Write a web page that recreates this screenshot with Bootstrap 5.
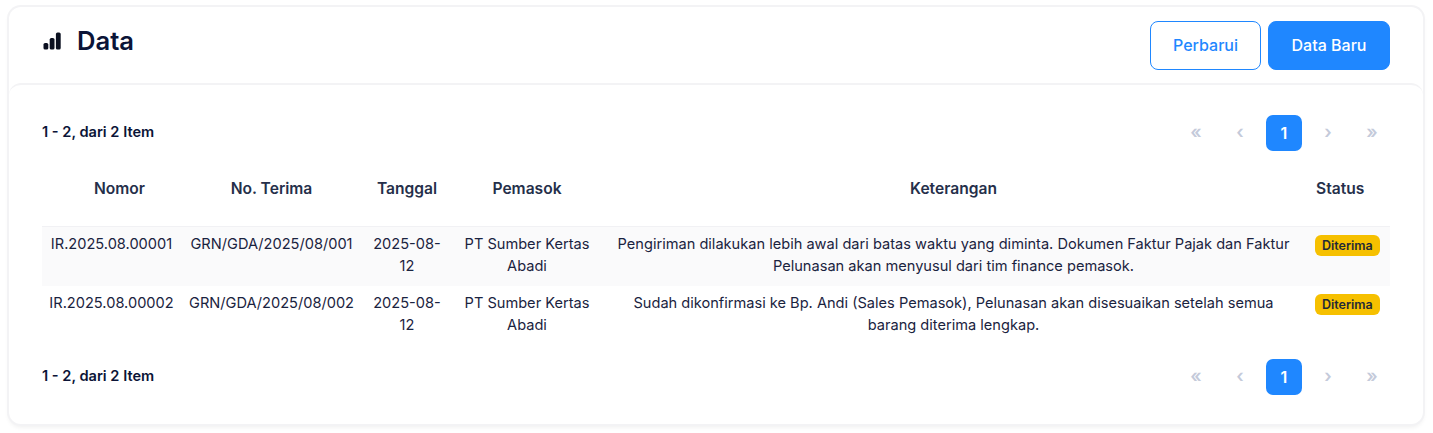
<!DOCTYPE html>
<html lang="id">
<head>
<meta charset="utf-8">
<title>Data</title>
<link href="https://cdn.jsdelivr.net/npm/bootstrap@5.3.0/dist/css/bootstrap.min.css" rel="stylesheet">
<style>
html,body{height:433px;overflow:hidden;background:#fff}
body{font-family:Inter,"Liberation Sans",sans-serif;color:#0f1a3a;padding:7px 10px 8px 9px;font-size:14px}
.shell{border:0;border-radius:12px;box-shadow:0 0 0 2px #f3f3f5,0 3px 5px rgba(0,0,0,.07);height:417px;background:#fff;overflow:hidden}
.shell-head{height:76px;padding:0 33px;display:flex;justify-content:space-between;align-items:flex-start}
.shell-title{display:flex;align-items:center;gap:16px;margin:18px 0 0 1px;font-size:25.6px;font-weight:600;line-height:32px;color:#0b1437}
.bars{display:block}
.acts{display:flex;gap:7px;margin-top:14px}
.acts .btn{height:49px;font-size:16px;font-weight:500;border-radius:8px;padding:0 0 2px;display:flex;align-items:center;justify-content:center}
.btn-a{width:111px;color:#1f87ff;background:#fff;border:1px solid #1f87ff}
.btn-b{width:122px;color:#fff;background:#1f87ff;border:1px solid #1f87ff}
.shell-body{border-top:2px solid #f3f3f5;border-radius:12px 12px 0 0;height:341px;padding:30px 33px 0 33px}
.pg-row{display:flex;justify-content:space-between;align-items:center;height:36px}
.pg-info{font-size:14.6px;font-weight:600;color:#0b1437}
.pg-list{display:flex;gap:8px;list-style:none;margin:0;padding:0}
.pg-list li{width:36px;height:36px;padding-bottom:3px;display:flex;align-items:center;justify-content:center;color:#c4cada;border-radius:7px;font-size:18px;font-weight:600}
.pg-list li.on{background:#1f87ff;color:#fff;font-size:16px;font-weight:600;padding-bottom:0}
.tbl{margin:0;font-size:14.6px;line-height:22px;text-align:center;color:#1a2340;width:100%;table-layout:fixed;--bs-table-bg:transparent}
.tbl th{font-size:15.6px;font-weight:600;color:#252f4a;padding:27px 8px 26px;border-bottom:1px solid #f1f1f4;line-height:22px;box-shadow:none}
.tbl th:first-child{padding-left:24px}
.tbl td{padding:6px 8px;border:0;vertical-align:top;box-shadow:none;height:59px}
.tbl td:first-child{padding:6px 0;white-space:nowrap}
.tbl td:last-child{padding:7px 10px 6px;text-align:left}
.tbl th:last-child{padding:27px 10px 26px 11px;text-align:left}
.tbl tr.alt td{background:#fafafb}
.c1{width:139px}.c2{width:181px}.c3{width:90px}.c4{width:150px}.c6{width:85px}
.tag{display:inline-block;background:#f6c000;color:#1f2937;font-size:12.5px;font-weight:600;line-height:15px;padding:3px 7px;border-radius:6px}
.foot{margin-top:14px}
</style>
</head>
<body>
<div class="card shell">
  <div class="shell-head">
    <h1 class="shell-title">
      <svg class="bars" width="18" height="18" viewBox="0 0 18 18" fill="#0b1020"><rect x="0.5" y="11" width="4.8" height="6.6" rx="1.6"/><rect x="6.7" y="6" width="4.8" height="11.6" rx="1.6"/><rect x="12.9" y="0.4" width="4.8" height="17.2" rx="1.6"/></svg>
      Data
    </h1>
    <div class="acts">
      <button type="button" class="btn btn-a">Perbarui</button>
      <button type="button" class="btn btn-b">Data Baru</button>
    </div>
  </div>
  <div class="shell-body">
    <div class="pg-row">
      <div class="pg-info">1 - 2, dari 2 Item</div>
      <ul class="pg-list"><li>«</li><li>‹</li><li class="on">1</li><li>›</li><li>»</li></ul>
    </div>
    <table class="table tbl">
      <colgroup><col class="c1"><col class="c2"><col class="c3"><col class="c4"><col><col class="c6"></colgroup>
      <thead>
        <tr><th>Nomor</th><th>No. Terima</th><th>Tanggal</th><th>Pemasok</th><th>Keterangan</th><th>Status</th></tr>
      </thead>
      <tbody>
        <tr class="alt"><td>IR.2025.08.00001</td><td>GRN/GDA/2025/08/001</td><td>2025-08-12</td><td>PT Sumber Kertas Abadi</td><td>Pengiriman dilakukan lebih awal dari batas waktu yang diminta. Dokumen Faktur Pajak dan Faktur Pelunasan akan menyusul dari tim finance pemasok.</td><td><span class="tag">Diterima</span></td></tr>
        <tr><td>IR.2025.08.00002</td><td>GRN/GDA/2025/08/002</td><td>2025-08-12</td><td>PT Sumber Kertas Abadi</td><td>Sudah dikonfirmasi ke Bp. Andi (Sales Pemasok), Pelunasan akan disesuaikan setelah semua barang diterima lengkap.</td><td><span class="tag">Diterima</span></td></tr>
      </tbody>
    </table>
    <div class="pg-row foot">
      <div class="pg-info">1 - 2, dari 2 Item</div>
      <ul class="pg-list"><li>«</li><li>‹</li><li class="on">1</li><li>›</li><li>»</li></ul>
    </div>
  </div>
</div>
<script src="https://cdn.jsdelivr.net/npm/bootstrap@5.3.0/dist/js/bootstrap.bundle.min.js"></script>
</body>
</html>
